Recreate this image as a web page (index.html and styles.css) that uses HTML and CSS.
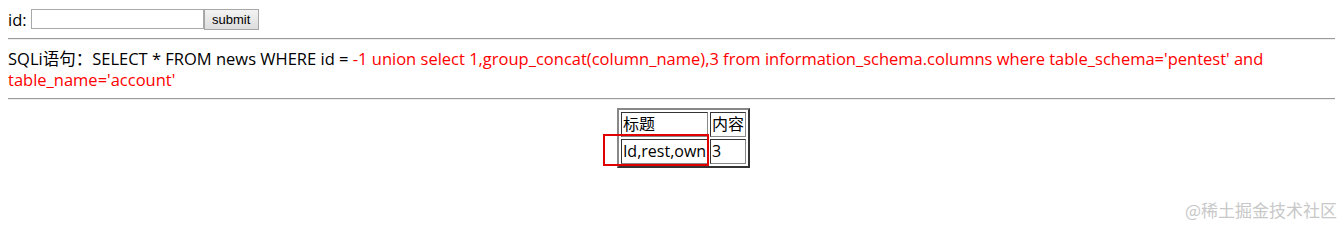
FILE: index.html
```html
<!DOCTYPE html>
<html lang="zh">
<head>
    <meta charset="UTF-8">
    <title>SQLi</title>
    <link rel="stylesheet" href="styles.css">
</head>
<body>
    <form class="search-form">
        id: <input type="text" name="id" class="id-input"><button type="submit" class="submit-btn">submit</button>
    </form>
    <hr>
    <p class="sql-line">SQLi语句：SELECT * FROM news WHERE id = <span class="payload">-1 union select 1,group_concat(column_name),3 from information_schema.columns where table_schema='pentest' and table_name='account'</span></p>
    <hr>
    <div class="result">
        <div class="table-wrap">
            <table class="news-table" border="1">
                <tr>
                    <td>标题</td>
                    <td>内容</td>
                </tr>
                <tr>
                    <td>Id,rest,own</td>
                    <td>3</td>
                </tr>
            </table>
            <div class="mark-box"></div>
        </div>
    </div>
    <div class="watermark">@稀土掘金技术社区</div>
</body>
</html>
```
FILE: styles.css
```css
body {
    font-family: 'Open Sans', 'Noto Sans CJK SC', sans-serif;
    font-size: 16.5px;
    color: #000;
    margin: 8px;
    line-height: 21px;
}
.search-form {
    margin: 0;
    height: 22px;
    display: flex;
    align-items: center;
}
.id-input {
    width: 169px;
    height: 16px;
    margin: 0 0 0 4px;
    padding: 1px;
    border: 1px solid #a9a9a9;
}
.submit-btn {
    font-family: 'Liberation Sans', sans-serif;
    font-size: 13px;
    height: 21px;
    width: 55px;
    padding: 0;
    border: 1px solid #a6a6a6;
    background: linear-gradient(#f3f3f3, #dddddd);
}
hr {
    margin: 8px 0;
    border: none;
    border-top: 1px solid #9a9a9a;
    border-bottom: 1px solid #eeeeee;
}
.sql-line {
    margin: 8px 0 7px;
    line-height: 21px;
}
.sql-line span {
    line-height: 21px;
}
.payload {
    color: #ff0000;
}
.result {
    display: flex;
    justify-content: center;
    padding-left: 24px;
}
.table-wrap {
    position: relative;
}
.news-table {
    border: 2px outset #888;
    border-spacing: 2px;
}
.news-table td {
    border: 1px inset #888;
    padding: 0 1px;
    line-height: 23px;
    font-size: 16px;
}
.mark-box {
    position: absolute;
    left: -14px;
    top: 26px;
    width: 102px;
    height: 28px;
    border: 2px solid #e00000;
}
.watermark {
    position: absolute;
    right: 6px;
    top: 199px;
    color: #c8c8c8;
    font-size: 17px;
    font-family: 'Noto Sans CJK SC', sans-serif;
}
```
